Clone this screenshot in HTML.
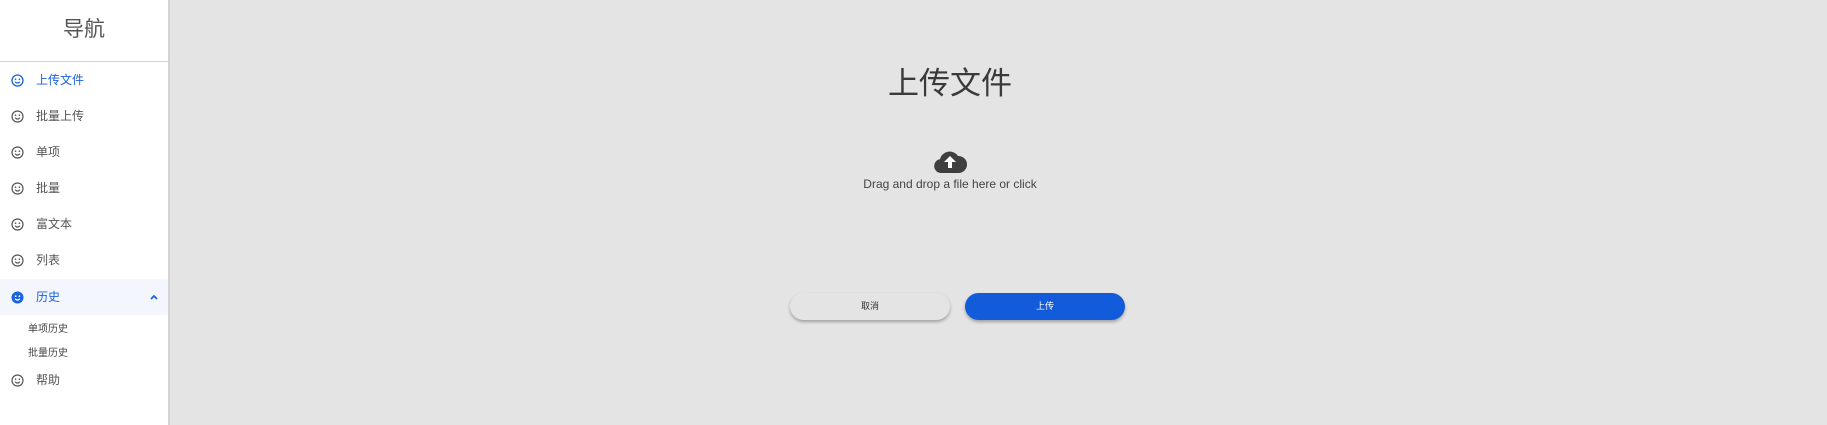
<!DOCTYPE html>
<html><head><meta charset="utf-8"><style>
*{margin:0;padding:0;box-sizing:border-box}
body{width:1827px;height:425px;overflow:hidden;background:#e4e4e4;font-family:"Liberation Sans","Noto Sans CJK SC",sans-serif;position:relative}
.side{position:absolute;left:0;top:0;width:170px;height:425px;background:#fff;border-right:2px solid #d4d4d4}
.title{position:absolute;left:0;width:168px;top:13px;text-align:center;font-size:21px;color:#555}
.div{position:absolute;left:0;top:61px;width:170px;height:1px;background:#d0d0d0}
.it{position:absolute;left:0;width:168px;height:36px;line-height:36px;font-size:12px;color:#555}
.it svg{position:absolute;left:11px;top:12px}
.it span{position:absolute;left:36px}
.act{color:#1a62e0}
.sub{position:absolute;left:28px;font-size:10px;color:#444}
.h{position:absolute;left:0;width:1900px;text-align:center;top:58px;font-size:31px;color:#3a3a3a}
.btn{position:absolute;top:293px;width:160px;height:27px;border-radius:14px;text-align:center;line-height:27px;font-size:9px;box-shadow:0 2px 3px rgba(0,0,0,.3)}
</style></head><body>
<div class="side">
<div class="title">导航</div><div class="div"></div>
<div class="it act" style="top:62px"><svg width="13" height="13" viewBox="0 0 13 13"><circle cx="6.5" cy="6.5" r="5.5" fill="none" stroke="#1a62e0" stroke-width="1.3"/><circle cx="4.6" cy="5.2" r=".8" fill="#1a62e0"/><circle cx="8.4" cy="5.2" r=".8" fill="#1a62e0"/><path d="M4 7.8q2.5 2.4 5 0" fill="none" stroke="#1a62e0" stroke-width="1.1"/></svg><span>上传文件</span></div>
<div class="it" style="top:98px"><svg width="13" height="13" viewBox="0 0 13 13"><circle cx="6.5" cy="6.5" r="5.5" fill="none" stroke="#555" stroke-width="1.2"/><circle cx="4.6" cy="5.2" r=".8" fill="#555"/><circle cx="8.4" cy="5.2" r=".8" fill="#555"/><path d="M4 7.8q2.5 2.4 5 0" fill="none" stroke="#555" stroke-width="1.1"/></svg><span>批量上传</span></div>
<div class="it" style="top:134px"><svg width="13" height="13" viewBox="0 0 13 13"><circle cx="6.5" cy="6.5" r="5.5" fill="none" stroke="#555" stroke-width="1.2"/><circle cx="4.6" cy="5.2" r=".8" fill="#555"/><circle cx="8.4" cy="5.2" r=".8" fill="#555"/><path d="M4 7.8q2.5 2.4 5 0" fill="none" stroke="#555" stroke-width="1.1"/></svg><span>单项</span></div>
<div class="it" style="top:170px"><svg width="13" height="13" viewBox="0 0 13 13"><circle cx="6.5" cy="6.5" r="5.5" fill="none" stroke="#555" stroke-width="1.2"/><circle cx="4.6" cy="5.2" r=".8" fill="#555"/><circle cx="8.4" cy="5.2" r=".8" fill="#555"/><path d="M4 7.8q2.5 2.4 5 0" fill="none" stroke="#555" stroke-width="1.1"/></svg><span>批量</span></div>
<div class="it" style="top:206px"><svg width="13" height="13" viewBox="0 0 13 13"><circle cx="6.5" cy="6.5" r="5.5" fill="none" stroke="#555" stroke-width="1.2"/><circle cx="4.6" cy="5.2" r=".8" fill="#555"/><circle cx="8.4" cy="5.2" r=".8" fill="#555"/><path d="M4 7.8q2.5 2.4 5 0" fill="none" stroke="#555" stroke-width="1.1"/></svg><span>富文本</span></div>
<div class="it" style="top:242px"><svg width="13" height="13" viewBox="0 0 13 13"><circle cx="6.5" cy="6.5" r="5.5" fill="none" stroke="#555" stroke-width="1.2"/><circle cx="4.6" cy="5.2" r=".8" fill="#555"/><circle cx="8.4" cy="5.2" r=".8" fill="#555"/><path d="M4 7.8q2.5 2.4 5 0" fill="none" stroke="#555" stroke-width="1.1"/></svg><span>列表</span></div>
<div class="it act" style="top:279px;background:#f3f7fd"><svg width="13" height="13" viewBox="0 0 13 13"><circle cx="6.5" cy="6.5" r="6" fill="#1a62e0"/><circle cx="4.6" cy="5.2" r=".9" fill="#fff"/><circle cx="8.4" cy="5.2" r=".9" fill="#fff"/><path d="M4 7.8q2.5 2.4 5 0" fill="none" stroke="#fff" stroke-width="1.1"/></svg><span>历史</span><svg style="left:150px;top:15px" width="8" height="6" viewBox="0 0 8 6"><path d="M1 5L4 2L7 5" fill="none" stroke="#1a62e0" stroke-width="1.8"/></svg></div>
<div class="sub" style="top:320px">单项历史</div>
<div class="sub" style="top:344px">批量历史</div>
<div class="it" style="top:362px"><svg width="13" height="13" viewBox="0 0 13 13"><circle cx="6.5" cy="6.5" r="5.5" fill="none" stroke="#555" stroke-width="1.2"/><circle cx="4.6" cy="5.2" r=".8" fill="#555"/><circle cx="8.4" cy="5.2" r=".8" fill="#555"/><path d="M4 7.8q2.5 2.4 5 0" fill="none" stroke="#555" stroke-width="1.1"/></svg><span>帮助</span></div>
</div>
<div class="h">上传文件</div>
<svg style="position:absolute;left:933px;top:147px" width="34" height="27" viewBox="0 0 34 27"><path d="M8 26a7 7 0 0 1-1-13.9A10 10 0 0 1 25 9a8.5 8.5 0 0 1 1 17z" fill="#3f3f3f"/><path d="M17 9l-6 6h4v6h4v-6h4z" fill="#fff"/></svg>
<div style="position:absolute;left:750px;width:400px;top:177px;text-align:center;font-size:12px;color:#444">Drag and drop a file here or click</div>
<div class="btn" style="left:790px;background:#e4e4e4;color:#333">取消</div>
<div class="btn" style="left:965px;background:#125bdb;color:#fff">上传</div>
</body></html>
